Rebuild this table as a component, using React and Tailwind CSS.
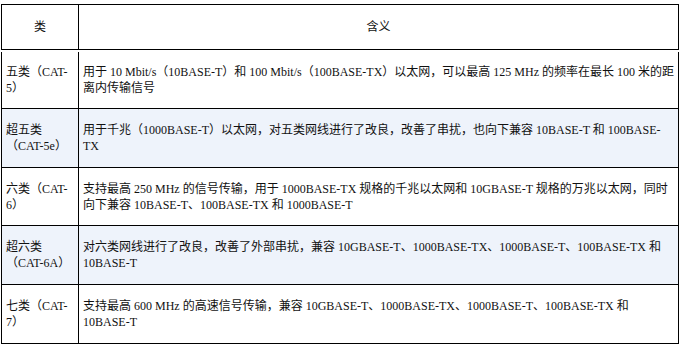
const rows = [
  {
    type: ['五类（CAT-', '5）'],
    desc: '用于 10 Mbit/s（10BASE-T）和 100 Mbit/s（100BASE-TX）以太网，可以最高 125 MHz 的频率在最长 100 米的距离内传输信号',
    h: 'h-[57px]',
    shade: false,
  },
  {
    type: ['超五类', '（CAT-5e）'],
    desc: '用于千兆（1000BASE-T）以太网，对五类网线进行了改良，改善了串扰，也向下兼容 10BASE-T 和 100BASE-TX',
    h: 'h-[59px]',
    shade: true,
  },
  {
    type: ['六类（CAT-', '6）'],
    desc: '支持最高 250 MHz 的信号传输，用于 1000BASE-TX 规格的千兆以太网和 10GBASE-T 规格的万兆以太网，同时向下兼容 10BASE-T、100BASE-TX 和 1000BASE-T',
    h: 'h-[58px]',
    shade: false,
  },
  {
    type: ['超六类', '（CAT-6A）'],
    desc: '对六类网线进行了改良，改善了外部串扰，兼容 10GBASE-T、1000BASE-TX、1000BASE-T、100BASE-TX 和 10BASE-T',
    h: 'h-[59px]',
    shade: true,
  },
  {
    type: ['七类（CAT-', '7）'],
    desc: '支持最高 600 MHz 的高速信号传输，兼容 10GBASE-T、1000BASE-TX、1000BASE-T、100BASE-TX 和 10BASE-T',
    h: 'h-[59px]',
    shade: false,
  },
];

export default function App() {
  return (
    <div
      className="w-[686px] h-[346px] bg-white pt-[4px] pl-[1px] text-[12px] leading-[16px] text-[#111]"
      style={{ fontFamily: '"Liberation Serif", "Noto Sans CJK SC", serif' }}
    >
      {/* 表头 */}
      <div className="w-[678px] h-[46px] border border-black grid grid-cols-[77px_1fr]">
        <div className="border-r border-black flex items-center justify-center">类</div>
        <div className="flex items-center justify-center">含义</div>
      </div>

      <div className="w-[678px] mt-[2px] border-x border-black">
        {rows.map((row, i) => (
          <div
            key={i}
            className={`${row.h} grid grid-cols-[77px_1fr] border-b border-black ${row.shade ? 'bg-[#eef3fb]' : 'bg-white'}`}
          >
            <div className="border-r border-black flex flex-col justify-center pl-1 pr-1">
              <span className="whitespace-nowrap">{row.type[0]}</span>
              <span className="whitespace-nowrap">{row.type[1]}</span>
            </div>
            <div className="flex items-center pl-1 pr-[2px]">
              <p>{row.desc}</p>
            </div>
          </div>
        ))}
      </div>
    </div>
  );
}
